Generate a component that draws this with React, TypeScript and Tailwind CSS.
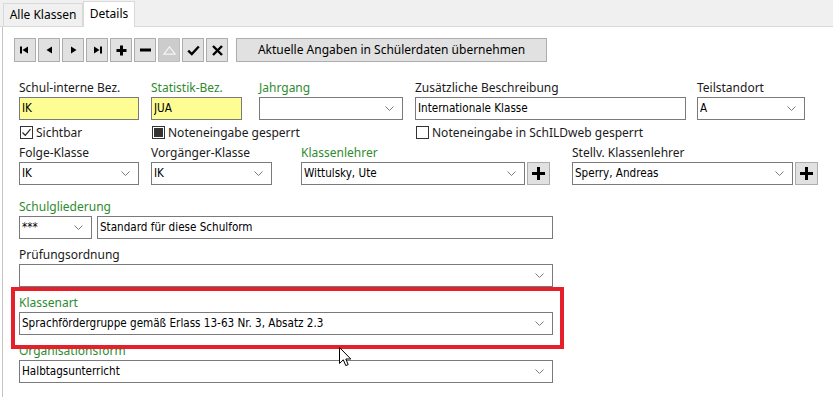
import React from 'react'

const labelFont = { fontFamily: '"Noto Sans", "Open Sans", sans-serif' }
const fieldFont = { fontFamily: '"DejaVu Sans Condensed", "Noto Sans", sans-serif' }

function Chevron() {
  return (
    <svg width="9" height="5" viewBox="0 0 9 5" className="shrink-0">
      <path d="M0.5 0.5 L4.5 4.5 L8.5 0.5" fill="none" stroke="#7a7a7a" strokeWidth="1" />
    </svg>
  )
}

type FieldProps = {
  value?: string
  width: string
  yellow?: boolean
  combo?: boolean
}

function Field({ value, width, yellow, combo }: FieldProps) {
  return (
    <div
      className={`h-[23px] ${width} border border-[#7a7a7a] flex items-center pl-[2px] pr-[8px] text-[11.6px] text-black ${yellow ? 'bg-[#fdfd93]' : 'bg-white'}`}
      style={fieldFont}
    >
      <span className="flex-1 truncate">{value}</span>
      {combo && <Chevron />}
    </div>
  )
}

function Label({ children, green }: { children: React.ReactNode; green?: boolean }) {
  return (
    <div
      className={`h-[17px] text-[12px] leading-[15px] whitespace-nowrap ${green ? 'text-[#2e8b2e]' : 'text-[#1a1a1a]'}`}
      style={labelFont}
    >
      {children}
    </div>
  )
}

function PlusButton() {
  return (
    <div className="w-[23px] h-[23px] ml-[2px] bg-[#e1e1e1] border border-[#adadad] flex items-center justify-center">
      <svg width="15" height="15" viewBox="0 0 15 15">
        <path d="M7.5 1 V14 M1 7.5 H14" stroke="#000" strokeWidth="3" />
      </svg>
    </div>
  )
}

function ToolButton({ children, disabled }: { children: React.ReactNode; disabled?: boolean }) {
  return (
    <div
      className={`w-[22px] h-[24px] border flex items-center justify-center ${disabled ? 'bg-[#cccccc] border-[#bdbdbd]' : 'bg-[#e1e1e1] border-[#adadad]'}`}
    >
      {children}
    </div>
  )
}

function Checkbox({ state, label }: { state: 'on' | 'off' | 'mixed'; label: string }) {
  return (
    <div className="flex items-center gap-[3px] text-[12px] text-[#1a1a1a]" style={labelFont}>
      <div className="w-[13px] h-[13px] border border-[#333] bg-white flex items-center justify-center">
        {state === 'on' && (
          <svg width="11" height="11" viewBox="0 0 11 11">
            <path d="M1.5 5.5 L4.3 8.3 L9.5 2.2" fill="none" stroke="#222" strokeWidth="1.2" />
          </svg>
        )}
        {state === 'mixed' && <div className="w-[9px] h-[9px] bg-[#333]" />}
      </div>
      <span>{label}</span>
    </div>
  )
}

function Cursor() {
  return (
    <svg width="13" height="21" viewBox="0 0 13 21" className="absolute left-[339px] top-[347px]">
      <path
        d="M0.5 0.5 L0.5 16.5 L4.3 12.8 L6.8 18.6 L9.2 17.6 L6.8 12 L11.8 12 Z"
        fill="#fff"
        stroke="#000"
        strokeWidth="1"
        strokeLinejoin="round"
      />
    </svg>
  )
}

export default function App() {
  return (
    <div className="relative w-[834px] h-[397px] bg-white overflow-hidden" style={labelFont}>
      {/* tab strip */}
      <div className="h-[27px] bg-[#f0f0f0] border-b border-[#d9d9d9] w-[833px] flex items-end pl-[3px]">
        <div className="h-[23px] w-[80px] border border-b-0 border-[#d9d9d9] flex items-center justify-center text-[12px] text-black">
          Alle Klassen
        </div>
        <div className="h-[26px] w-[52px] -mb-px border border-b-0 border-[#d9d9d9] bg-white flex items-start pt-[3px] justify-center text-[12px] text-black">
          Details
        </div>
      </div>

      <div className="ml-[2px] border-l border-[#c4c4c4] h-[370px]">
        {/* toolbar */}
        <div className="pt-[11px] pl-[11px] flex gap-[2px]">
          <ToolButton>
            <svg width="10" height="8" viewBox="0 0 10 8">
              <rect x="0" y="0.5" width="2" height="7" fill="#000" />
              <path d="M2.5 4 L8 0.5 V7.5 Z" fill="#000" />
            </svg>
          </ToolButton>
          <ToolButton>
            <svg width="7" height="8" viewBox="0 0 7 8">
              <path d="M0.5 4 L6 0.5 V7.5 Z" fill="#000" />
            </svg>
          </ToolButton>
          <ToolButton>
            <svg width="7" height="8" viewBox="0 0 7 8">
              <path d="M6.5 4 L1 0.5 V7.5 Z" fill="#000" />
            </svg>
          </ToolButton>
          <ToolButton>
            <svg width="10" height="8" viewBox="0 0 10 8">
              <path d="M7.5 4 L2 0.5 V7.5 Z" fill="#000" />
              <rect x="8" y="0.5" width="2" height="7" fill="#000" />
            </svg>
          </ToolButton>
          <ToolButton>
            <svg width="11" height="11" viewBox="0 0 11 11">
              <path d="M5.5 0.5 V10.5 M0.5 5.5 H10.5" stroke="#000" strokeWidth="3" />
            </svg>
          </ToolButton>
          <ToolButton>
            <svg width="11" height="4" viewBox="0 0 11 4">
              <rect x="0" y="0.5" width="11" height="3" fill="#000" />
            </svg>
          </ToolButton>
          <ToolButton disabled>
            <svg width="13" height="9" viewBox="0 0 13 9">
              <path d="M6.5 0.8 L12.2 8.2 H0.8 Z" fill="none" stroke="#f4f4f4" strokeWidth="1.2" />
            </svg>
          </ToolButton>
          <ToolButton>
            <svg width="13" height="11" viewBox="0 0 13 11">
              <path d="M1.2 5.6 L4.8 9 L11.8 1.5" fill="none" stroke="#000" strokeWidth="2.4" />
            </svg>
          </ToolButton>
          <ToolButton>
            <svg width="11" height="11" viewBox="0 0 11 11">
              <path d="M1 1 L10 10 M10 1 L1 10" stroke="#000" strokeWidth="2.4" />
            </svg>
          </ToolButton>
          <div className="ml-[6px] w-[311px] h-[24px] bg-[#e1e1e1] border border-[#adadad] flex items-center justify-center text-[12px] text-black">
            Aktuelle Angaben in Schülerdaten übernehmen
          </div>
        </div>

        {/* form */}
        <div className="pl-[16px]">
          {/* row 1 */}
          <div className="mt-[18px] flex items-start">
            <div>
              <Label>Schul-interne Bez.</Label>
              <Field value="IK" width="w-[120px]" yellow />
            </div>
            <div className="ml-[12px]">
              <Label green>Statistik-Bez.</Label>
              <Field value="JUA" width="w-[91px]" yellow />
            </div>
            <div className="ml-[17px]">
              <Label green>Jahrgang</Label>
              <Field width="w-[144px]" combo />
            </div>
            <div className="ml-[12px]">
              <Label>Zusätzliche Beschreibung</Label>
              <Field value="Internationale Klasse" width="w-[271px]" />
            </div>
            <div className="ml-[11px]">
              <Label>Teilstandort</Label>
              <Field value="A" width="w-[108px]" combo />
            </div>
          </div>

          {/* checkboxes */}
          <div className="h-[25px] flex items-center">
            <div className="w-[132px] pl-[1px]">
              <Checkbox state="on" label="Sichtbar" />
            </div>
            <div className="w-[264px] pl-[1px]">
              <Checkbox state="mixed" label="Noteneingabe gesperrt" />
            </div>
            <div className="pl-[1px]">
              <Checkbox state="off" label="Noteneingabe in SchILDweb gesperrt" />
            </div>
          </div>

          {/* row 3 */}
          <div className="flex items-start">
            <div>
              <Label>Folge-Klasse</Label>
              <Field value="IK" width="w-[120px]" combo />
            </div>
            <div className="ml-[12px]">
              <Label>Vorgänger-Klasse</Label>
              <Field value="IK" width="w-[121px]" combo />
            </div>
            <div className="ml-[29px]">
              <Label green>Klassenlehrer</Label>
              <div className="flex">
                <Field value="Wittulsky, Ute" width="w-[224px]" combo />
                <PlusButton />
              </div>
            </div>
            <div className="ml-[22px]">
              <Label>Stellv. Klassenlehrer</Label>
              <div className="flex">
                <Field value="Sperry, Andreas" width="w-[221px]" combo />
                <PlusButton />
              </div>
            </div>
          </div>

          {/* Schulgliederung */}
          <div className="mt-[14px]">
            <Label green>Schulgliederung</Label>
            <div className="flex">
              <Field value="***" width="w-[73px]" combo />
              <div className="ml-[5px]">
                <Field value="Standard für diese Schulform" width="w-[456px]" />
              </div>
            </div>
          </div>

          <div className="mt-[8px]">
            <Label>Prüfungsordnung</Label>
            <Field width="w-[534px]" combo />
          </div>

          <div className="mt-[8px]">
            <Label green>Klassenart</Label>
            <Field value="Sprachfördergruppe gemäß Erlass 13-63 Nr. 3, Absatz 2.3" width="w-[534px]" combo />
          </div>

          <div className="mt-[8px]">
            <Label green>Organisationsform</Label>
            <Field value="Halbtagsunterricht" width="w-[534px]" combo />
          </div>
        </div>
      </div>

      {/* annotation overlay */}
      <div className="absolute left-[11px] top-[287px] w-[553px] h-[62px] border-[4px] border-[#e5202b]" />
      <Cursor />
    </div>
  )
}
